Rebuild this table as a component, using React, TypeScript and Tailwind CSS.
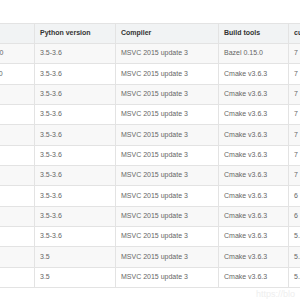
import React from "react";

type Row = { name: string; py: string; compiler: string; build: string; cudnn: string; cuda: string };

const rows: Row[] = [
  { name: "tensorflow_gpu-1.12.0", py: "3.5-3.6", compiler: "MSVC 2015 update 3", build: "Bazel 0.15.0", cudnn: "7", cuda: "9" },
  { name: "tensorflow_gpu-1.11.0", py: "3.5-3.6", compiler: "MSVC 2015 update 3", build: "Cmake v3.6.3", cudnn: "7", cuda: "9" },
  { name: "tensorflow_gpu-1.9.0", py: "3.5-3.6", compiler: "MSVC 2015 update 3", build: "Cmake v3.6.3", cudnn: "7", cuda: "9" },
  { name: "tensorflow_gpu-1.8.0", py: "3.5-3.6", compiler: "MSVC 2015 update 3", build: "Cmake v3.6.3", cudnn: "7", cuda: "9" },
  { name: "tensorflow_gpu-1.7.0", py: "3.5-3.6", compiler: "MSVC 2015 update 3", build: "Cmake v3.6.3", cudnn: "7", cuda: "9" },
  { name: "tensorflow_gpu-1.6.0", py: "3.5-3.6", compiler: "MSVC 2015 update 3", build: "Cmake v3.6.3", cudnn: "7", cuda: "9" },
  { name: "tensorflow_gpu-1.5.0", py: "3.5-3.6", compiler: "MSVC 2015 update 3", build: "Cmake v3.6.3", cudnn: "7", cuda: "9" },
  { name: "tensorflow_gpu-1.4.0", py: "3.5-3.6", compiler: "MSVC 2015 update 3", build: "Cmake v3.6.3", cudnn: "6", cuda: "8" },
  { name: "tensorflow_gpu-1.3.0", py: "3.5-3.6", compiler: "MSVC 2015 update 3", build: "Cmake v3.6.3", cudnn: "6", cuda: "8" },
  { name: "tensorflow_gpu-1.2.0", py: "3.5-3.6", compiler: "MSVC 2015 update 3", build: "Cmake v3.6.3", cudnn: "5.1", cuda: "8" },
  { name: "tensorflow_gpu-1.1.0", py: "3.5", compiler: "MSVC 2015 update 3", build: "Cmake v3.6.3", cudnn: "5.1", cuda: "8" },
  { name: "tensorflow_gpu-1.0.0", py: "3.5", compiler: "MSVC 2015 update 3", build: "Cmake v3.6.3", cudnn: "5.1", cuda: "8" },
];

const cell = "border border-[#e3e3e3] px-[5px] text-left align-middle whitespace-nowrap overflow-hidden";

export default function App() {
  return (
    <div className="relative w-[300px] h-[300px] overflow-hidden bg-white font-['Liberation_Sans',Arial,sans-serif] text-[7px]">
      <div className="pt-[23px]">
        <table className="table-fixed border-collapse -ml-[72px] w-[480px]">
          <colgroup>
            <col className="w-[106px]" />
            <col className="w-[81px]" />
            <col className="w-[103px]" />
            <col className="w-[70px]" />
            <col className="w-[60px]" />
            <col className="w-[60px]" />
          </colgroup>
          <thead>
            <tr className="h-[20px] bg-[#f1f3f4] text-[#333]">
              <th className={`${cell} font-bold`}>Version</th>
              <th className={`${cell} font-bold`}>Python version</th>
              <th className={`${cell} font-bold`}>Compiler</th>
              <th className={`${cell} font-bold`}>Build tools</th>
              <th className={`${cell} font-bold`}>cuDNN</th>
              <th className={`${cell} font-bold`}>CUDA</th>
            </tr>
          </thead>
          <tbody className="text-[#666]">
            {rows.map((r, i) => (
              <tr key={r.name} className={`h-[20.33px] ${i % 2 === 0 ? "bg-[#f8f8f8]" : "bg-white"}`}>
                <td className={cell}>{r.name}</td>
                <td className={cell}>{r.py}</td>
                <td className={cell}>{r.compiler}</td>
                <td className={cell}>{r.build}</td>
                <td className={cell}>{r.cudnn}</td>
                <td className={cell}>{r.cuda}</td>
              </tr>
            ))}
          </tbody>
        </table>
      </div>
      <span className="absolute left-[256px] top-[288px] text-[9px] text-[#eeeeee]">https://blo</span>
    </div>
  );
}
